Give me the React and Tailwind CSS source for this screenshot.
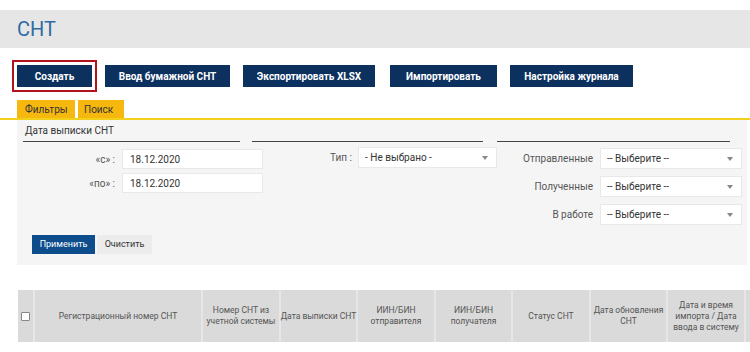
function Caret() {
    return <span className="ml-auto mr-[8px] w-0 h-0 border-l-[3px] border-r-[3px] border-t-[4px] border-l-transparent border-r-transparent border-t-[#888]"></span>;
}

function Select({ text, w }) {
    return (
        <div className={`${w} h-full bg-white border border-[#e8e8e8] flex items-center pl-[6px] text-[10px] text-[#333]`}>
            {text}
            <Caret />
        </div>
    );
}

const cols = [
    ["w-[168px]", "Регистрационный номер СНТ"],
    ["w-[78px]", "Номер СНТ из учетной системы"],
    ["w-[77px] whitespace-nowrap", "Дата выписки СНТ"],
    ["w-[78px]", "ИИН/БИН отправителя"],
    ["w-[77px]", "ИИН/БИН получателя"],
    ["w-[78px]", "Статус СНТ"],
    ["w-[77px]", "Дата обновления СНТ"],
    ["w-[78px]", "Дата и время импорта / Дата ввода в систему"],
];

export default function App() {
    return (
        <div className="w-[750px] h-[352px] overflow-hidden bg-white pt-[10px] font-['Roboto',sans-serif]">
            <div className="h-[38px] bg-[#e6e6e6] flex items-center pl-[17px]">
                <h1 className="text-[20px] text-[#2f6aa3] leading-none">СНТ</h1>
            </div>

            <div className="flex gap-[13px] pl-[17px] mt-[17px]">
                <button className="w-[75px] h-[22px] bg-[#0d315f] text-white text-[10px] font-bold outline-2 outline-[#b3121c] outline-offset-[3px]">Создать</button>
                <button className="w-[125px] h-[22px] bg-[#0d315f] text-white text-[10px] font-bold">Ввод бумажной СНТ</button>
                <button className="w-[132px] h-[22px] bg-[#0d315f] text-white text-[10px] font-bold">Экспортировать XLSX</button>
                <button className="w-[107px] h-[22px] bg-[#0d315f] text-white text-[10px] font-bold ml-[2px]">Импортировать</button>
                <button className="w-[123px] h-[22px] bg-[#0d315f] text-white text-[10px] font-bold">Настройка журнала</button>
            </div>

            <div className="flex gap-[3px] pl-[17px] mt-[13px] border-b-2 border-[#f2cf1a]">
                <div className="w-[58px] h-[18px] bg-[#f6b70f] text-[10px] text-[#333] pl-[8px] flex items-center">Фильтры</div>
                <div className="w-[46px] h-[18px] bg-[#f6b70f] text-[10px] text-[#333] pl-[6px] flex items-center">Поиск</div>
            </div>

            <div className="ml-[17px] w-[730px] bg-[#f5f5f5] pb-[11px]">
                <div className="flex pl-[6px] gap-[12px]">
                    <div className="w-[217px] h-[22px] border-b border-[#444] flex items-end pb-[3px] pl-[2px] text-[10px] text-[#333]">Дата выписки СНТ</div>
                    <div className="w-[231px] h-[22px] border-b border-[#444]"></div>
                    <div className="w-[233px] h-[22px] border-b border-[#444] ml-[2px]"></div>
                </div>

                <div className="flex pl-[6px] mt-[5px] text-[10px] text-[#555]">
                    <div className="w-[240px] pt-[2px] flex flex-col gap-[4px]">
                        <div className="flex items-center h-[20px]">
                            <span className="w-[92px] text-right">«с» :</span>
                            <div className="ml-[7px] w-[141px] h-full bg-white border border-[#e8e8e8] flex items-center pl-[7px] text-[#333]">18.12.2020</div>
                        </div>
                        <div className="flex items-center h-[20px]">
                            <span className="w-[92px] text-right">«по» :</span>
                            <div className="ml-[7px] w-[141px] h-full bg-white border border-[#e8e8e8] flex items-center pl-[7px] text-[#333]">18.12.2020</div>
                        </div>
                    </div>

                    <div className="w-[234px]">
                        <div className="flex items-center h-[21px]">
                            <span className="w-[89px] text-right">Тип :</span>
                            <div className="ml-[6px] h-full flex">
                                <Select w="w-[139px]" text="- Не выбрано -" />
                            </div>
                        </div>
                    </div>

                    <div className="w-[245px] pt-[1px] flex flex-col gap-[7px]">
                        {["Отправленные", "Полученные", "В работе"].map((l) => (
                            <div key={l} className="flex items-center h-[21px]">
                                <span className="w-[96px] text-right">{l}</span>
                                <div className="ml-[7px] h-full flex">
                                    <Select w="w-[142px]" text="-- Выберите --" />
                                </div>
                            </div>
                        ))}
                    </div>
                </div>

                <div className="flex ml-[15px] mt-[10px]">
                    <button className="w-[63px] h-[19px] bg-[#0e4d8c] text-white text-[9px]">Применить</button>
                    <button className="w-[55px] h-[19px] ml-[2px] bg-[#ececec] text-[#333] text-[9px]">Очистить</button>
                </div>
            </div>

            <div className="ml-[18px] mt-[25px] flex h-[52px] bg-[#dadada] text-[8.5px] text-[#555] leading-[11px]">
                <div className="w-[17px] shrink-0 border-r-2 border-[#e6e6e6] flex items-center justify-center">
                    <span className="w-[9px] h-[9px] bg-white border border-[#888] rounded-[1px]"></span>
                </div>
                {cols.map(([w, t]) => (
                    <div key={t} className={`${w} shrink-0 border-r-2 border-[#e6e6e6] flex items-center justify-center text-center`}>
                        {t}
                    </div>
                ))}
                <div className="w-[60px] shrink-0"></div>
            </div>
        </div>
    );
}
